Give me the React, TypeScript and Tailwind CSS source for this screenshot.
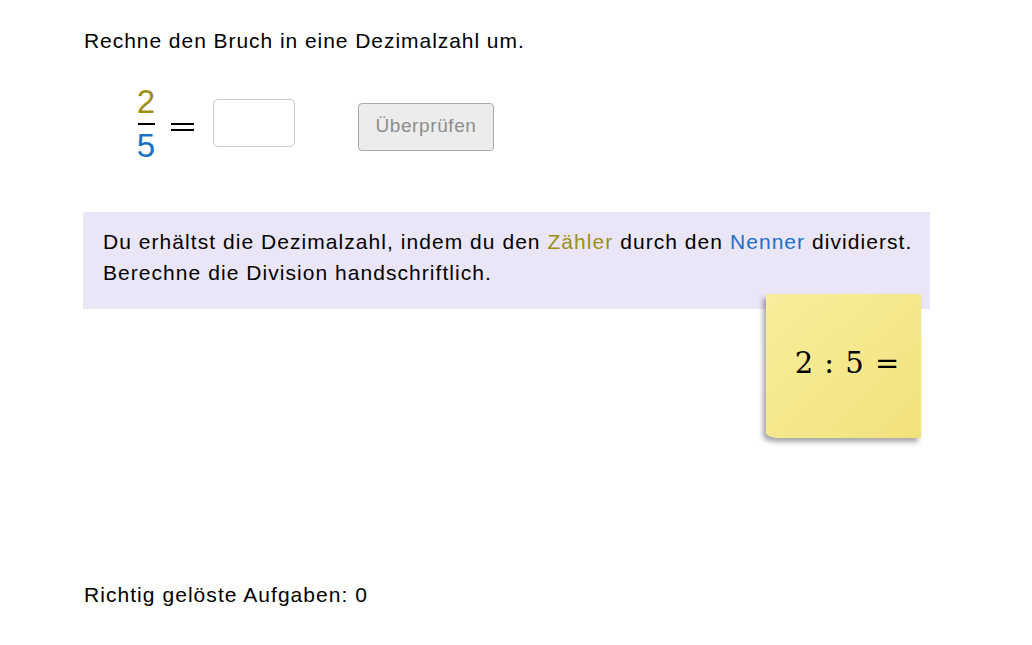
import React from "react";

const font = { fontFamily: '"Liberation Sans", Arial, sans-serif' };

const App: React.FC = () => {
  return (
    <div className="min-h-[645px] w-[1032px] bg-white text-black" style={font}>
      <div className="flex flex-col pl-[84px] pt-[27px] w-[930px]">
        {/* Task */}
        <p className="text-[21px] leading-[28px] tracking-[0.95px]">Rechne den Bruch in eine Dezimalzahl um.</p>

        {/* Fraction row */}
        <div className="flex items-center mt-[26px] ml-[52px] h-[86px]">
          <div className="flex flex-col items-center w-[20px]">
            <span className="text-[33px] leading-[34px] text-[#9c8f13]">2</span>
            <span className="h-[2px] w-[17px] bg-black my-[4px]" />
            <span className="text-[33px] leading-[34px] text-[#1a6fc9]">5</span>
          </div>
          <div className="ml-[15px] mt-[5px] flex flex-col gap-[4px] w-[23px]">
            <span className="h-[2px] w-full bg-black" />
            <span className="h-[2px] w-full bg-black" />
          </div>
          <div className="ml-[19px] h-[48px] w-[82px] rounded-[5px] border border-[#c8c8c8] bg-white -mt-[3px]" />
          <button className="ml-[63px] h-[48px] w-[136px] rounded-[4px] border border-[#a9a9a9] bg-[#ececec] text-[19px] tracking-[0.6px] text-[#8c8c8c] mt-[5px]" style={font}>
            Überprüfen
          </button>
        </div>

        {/* Hint */}
        <div className="mt-[45px] -ml-[1px] w-[847px] bg-[#ebe6f7] pl-[20px] pt-[14px] pb-[21px] text-[21px] leading-[31px] tracking-[1.05px]">
          <p>
            Du erhältst die Dezimalzahl, indem du den <span className="text-[#9c8f13]">Zähler</span> durch den{" "}
            <span className="text-[#1a6fc9]">Nenner</span> dividierst.
          </p>
          <p>Berechne die Division handschriftlich.</p>
        </div>

        {/* Sticky note */}
        <div className="relative self-end -mt-[15px] mr-[9px] h-[144px] w-[155px] rounded-bl-[14px_6px] bg-gradient-to-br from-[#f8ee9c] to-[#f2e27c] shadow-[-3px_4px_5px_rgba(0,0,0,0.35)] flex items-center justify-center pb-[4px] pl-[8px]">
          <span className="text-[29px] tracking-[1px]" style={{ fontFamily: '"DejaVu Serif", "Liberation Serif", serif' }}>
            2 : 5 =
          </span>
        </div>

        {/* Footer */}
        <p className="mt-[143px] text-[21px] leading-[28px] tracking-[1.05px]">Richtig gelöste Aufgaben: 0</p>
      </div>
    </div>
  );
};

export default App;
